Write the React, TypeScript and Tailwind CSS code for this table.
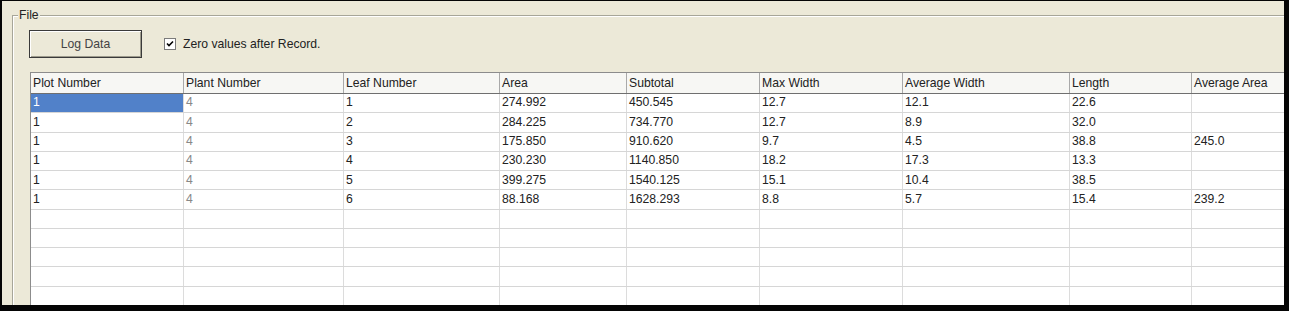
import React from 'react'

// Log window: "File" group with a Log Data button, a checkbox and the data grid

const FONT = { fontFamily: '"Liberation Sans", Arial, sans-serif' }

const COLUMNS = [
  { title: 'Plot Number', w: 'w-[153px]' },
  { title: 'Plant Number', w: 'w-[160px]' },
  { title: 'Leaf Number', w: 'w-[156px]' },
  { title: 'Area', w: 'w-[127px]' },
  { title: 'Subtotal', w: 'w-[133px]' },
  { title: 'Max Width', w: 'w-[143px]' },
  { title: 'Average Width', w: 'w-[167px]' },
  { title: 'Length', w: 'w-[122px]' },
  { title: 'Average Area', w: 'w-[200px]' },
]

const ROWS: string[][] = [
  ['1', '4', '1', '274.992', '450.545', '12.7', '12.1', '22.6', ''],
  ['1', '4', '2', '284.225', '734.770', '12.7', '8.9', '32.0', ''],
  ['1', '4', '3', '175.850', '910.620', '9.7', '4.5', '38.8', '245.0'],
  ['1', '4', '4', '230.230', '1140.850', '18.2', '17.3', '13.3', ''],
  ['1', '4', '5', '399.275', '1540.125', '15.1', '10.4', '38.5', ''],
  ['1', '4', '6', '88.168', '1628.293', '8.8', '5.7', '15.4', '239.2'],
  ['', '', '', '', '', '', '', '', ''],
  ['', '', '', '', '', '', '', '', ''],
  ['', '', '', '', '', '', '', '', ''],
  ['', '', '', '', '', '', '', '', ''],
  ['', '', '', '', '', '', '', '', ''],
]

function DataGrid() {
  return (
    <div className="ml-[1px] mt-[14px] w-[1400px] border-t border-l border-[#8c8c8c] bg-white">
      {/* Header */}
      <div className="flex h-[21px] border-b border-[#6f6f6f] bg-[#f7f7f4]">
        {COLUMNS.map((c) => (
          <div
            key={c.title}
            className={`${c.w} shrink-0 flex items-center pl-[2px] border-r border-[#a9a9a9] text-[#222] whitespace-nowrap`}
          >
            {c.title}
          </div>
        ))}
      </div>

      {/* Rows */}
      {ROWS.map((row, r) => (
        <div key={r} className="flex h-[19.27px] border-b border-[#d6d6d6]">
          {row.map((val, c) => {
            const selected = r === 0 && c === 0
            return (
              <div
                key={c}
                className={`${COLUMNS[c].w} shrink-0 flex items-center pl-[2px] pb-[1px] border-r border-[#dcdcdc] whitespace-nowrap ${
                  selected ? 'bg-[#5181c9] text-white' : c === 1 ? 'text-[#888888]' : 'text-[#222]'
                }`}
              >
                {val}
              </div>
            )
          })}
        </div>
      ))}
    </div>
  )
}

export default function App() {
  return (
    <div
      className="w-[1289px] h-[311px] bg-[#050505] overflow-hidden text-[12.2px] antialiased"
      style={FONT}
    >
      <div className="ml-[2px] mt-[1px] w-[1282px] h-[304px] bg-[#ece9d8] overflow-hidden">
        {/* Group box "File" */}
        <div className="relative ml-[10px] mt-[14px] w-[1400px] h-[400px] border-t border-l border-[#a7a699] shadow-[inset_1px_1px_0_#ffffff]">
          <span className="absolute -top-[8px] left-[5px] px-[1px] bg-[#ece9d8] leading-[14px] text-[#222]">
            File
          </span>

          <div className="pl-[16px] pt-[14px]">
            <div className="flex items-center">
              <button
                type="button"
                className="w-[113px] h-[28px] border border-[#3a3a3a] bg-[#ece9d8] shadow-[inset_1px_1px_0_#ffffff,inset_-1px_-1px_0_#9d9b8c] text-[#444]"
              >
                Log Data
              </button>

              <label className="ml-[22px] flex items-center gap-[7px] text-[#222]">
                <span className="w-[12px] h-[12px] border border-[#7b7b7b] bg-white flex items-center justify-center">
                  <svg width="8" height="8" viewBox="0 0 8 8">
                    <path d="M1 3.5 L3 5.5 L7 1.5" stroke="#000" strokeWidth="1.6" fill="none" />
                  </svg>
                </span>
                Zero values after Record.
              </label>
            </div>

            <DataGrid />
          </div>
        </div>
      </div>
    </div>
  )
}
